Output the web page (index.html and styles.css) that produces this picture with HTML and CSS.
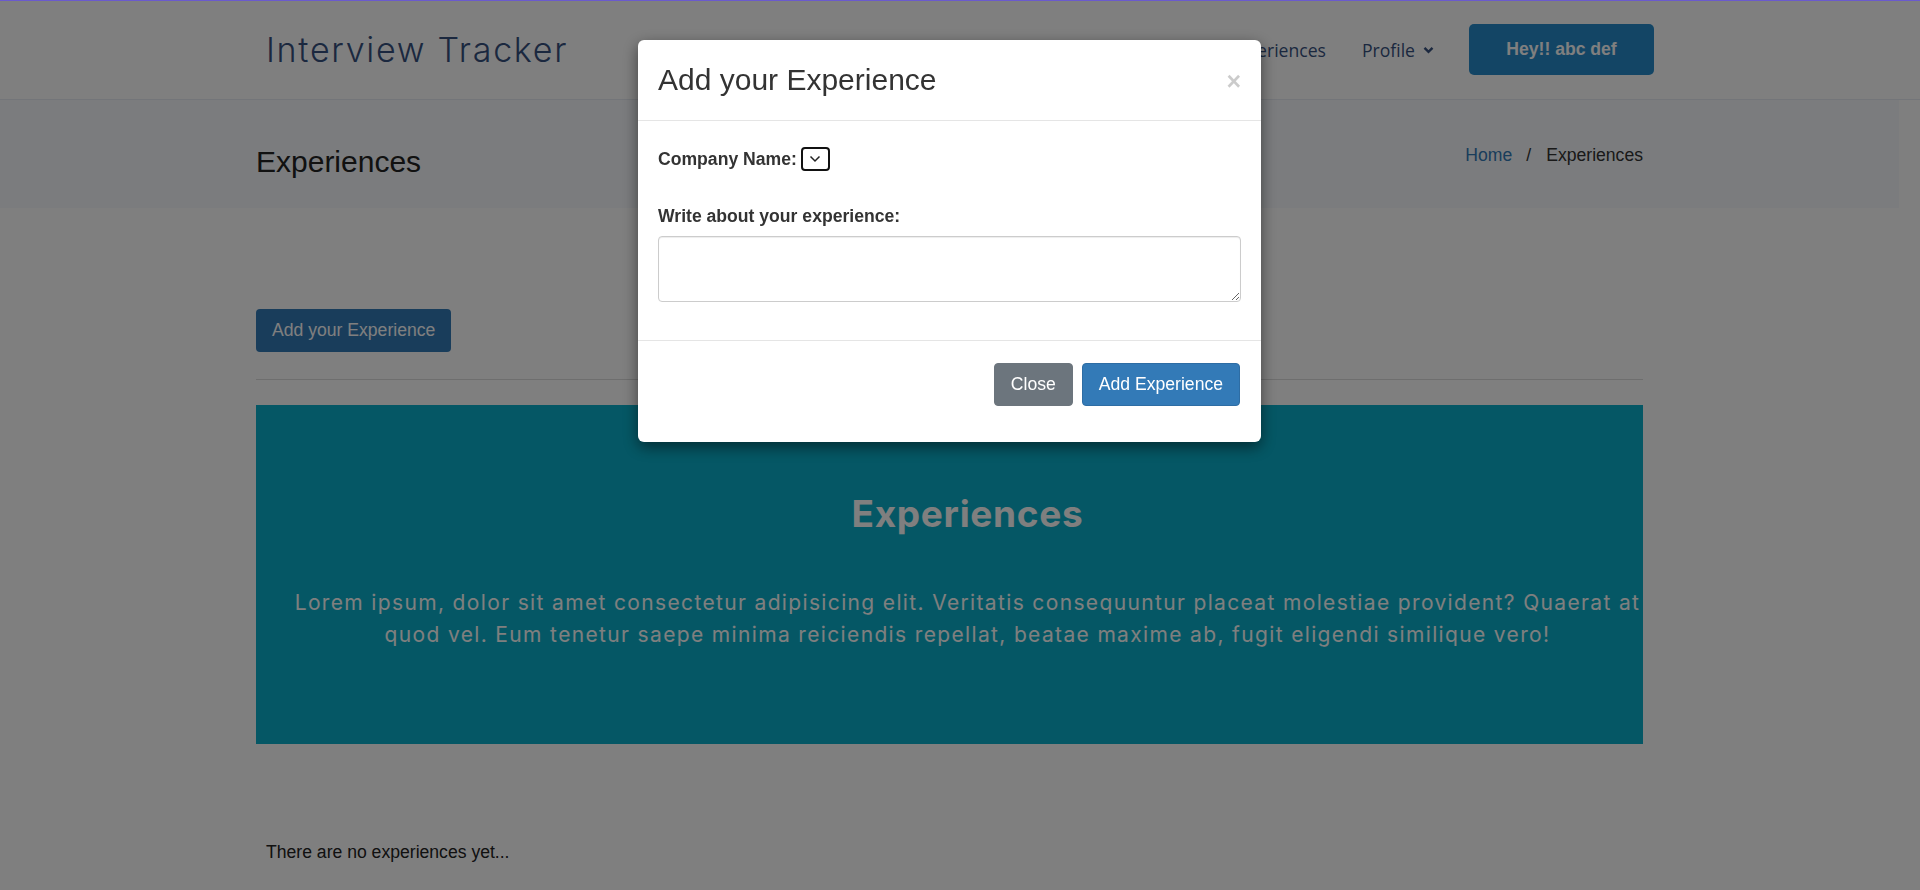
FILE: index.html
```html
<!DOCTYPE html>
<html lang="en">
<head>
<meta charset="utf-8">
<title>Interview Tracker - Experiences</title>
<link rel="stylesheet" href="styles.css">
</head>
<body>
<div class="focus-line"></div>
<header class="site-header">
  <div class="header-inner">
    <a class="logo" href="#">Interview Tracker</a>
    <nav class="main-nav">
      <a href="#">Home</a>
      <a href="#">Experiences</a>
      <a href="#" class="dropdown">Profile
        <svg class="chev" width="11" height="8" viewBox="0 0 11 8"><path d="M1.5 1.8 L5.5 5.8 L9.5 1.8" fill="none" stroke="currentColor" stroke-width="2.4"/></svg>
      </a>
    </nav>
    <a class="hey-btn" href="#">Hey!! abc def</a>
  </div>
</header>
<div class="page">
  <section class="title-band">
    <div class="container title-row">
      <h2 class="page-title">Experiences</h2>
      <ol class="breadcrumb">
        <li><a href="#">Home</a></li>
        <li class="sep">/</li>
        <li>Experiences</li>
      </ol>
    </div>
  </section>
  <main class="container main">
    <button class="btn add-btn" type="button">Add your Experience</button>
    <hr class="divider">
    <section class="banner">
      <div class="banner-inner">
        <h2 class="banner-title">Experiences</h2>
        <p class="banner-text">Lorem ipsum, dolor sit amet consectetur adipisicing elit. Veritatis consequuntur placeat molestiae provident? Quaerat at<br>quod vel. Eum tenetur saepe minima reiciendis repellat, beatae maxime ab, fugit eligendi similique vero!</p>
      </div>
    </section>
    <p class="empty">There are no experiences yet...</p>
  </main>
</div>
<div class="backdrop"></div>
<div class="modal">
  <div class="modal-dialog">
    <div class="modal-header">
      <h4 class="modal-title">Add your Experience</h4>
      <button class="close" type="button">&times;</button>
    </div>
    <div class="modal-body">
      <div class="field-inline">
        <label>Company Name:</label>
        <span class="select-box"><svg width="12" height="8" viewBox="0 0 12 8"><path d="M1.5 1.5 L6 6 L10.5 1.5" fill="none" stroke="#222" stroke-width="1.5"/></svg></span>
      </div>
      <div class="field">
        <label>Write about your experience:</label>
        <textarea class="text-input"></textarea>
      </div>
    </div>
    <div class="modal-footer">
      <button class="mbtn mbtn-secondary" type="button">Close</button>
      <button class="mbtn mbtn-primary" type="button">Add Experience</button>
    </div>
  </div>
</div>
</body>
</html>
```

FILE: styles.css
```css
html, body {
  margin: 0;
  padding: 0;
}
body {
  font-family: "Liberation Sans", Arial, sans-serif;
  font-size: 17.6px;
  color: #333;
  background: #fff;
  overflow: hidden;
}
.focus-line {
  position: fixed;
  top: 0;
  left: 0;
  right: 0;
  height: 1px;
  background: #6a5acd;
  z-index: 3000;
}

/* header */
.site-header {
  height: 100px;
  box-sizing: border-box;
  border-bottom: 1px solid #e6ebf2;
  background: #fff;
}
.header-inner {
  width: 1388px;
  height: 100%;
  margin: 0 auto;
  display: flex;
  align-items: center;
}
.logo {
  font-family: Inter, "Open Sans", sans-serif;
  font-weight: 300;
  font-size: 34px;
  letter-spacing: 1.7px;
  color: #37517e;
  text-decoration: none;
  margin-right: auto;
}
.main-nav {
  display: flex;
  align-items: center;
  gap: 36px;
}
.main-nav a {
  font-family: "Open Sans", sans-serif;
  font-size: 17.6px;
  color: #37517e;
  text-decoration: none;
  display: flex;
  align-items: center;
}
.chev {
  margin-left: 8px;
}
.hey-btn {
  margin-left: 35px;
  width: 185px;
  height: 51px;
  display: flex;
  align-items: center;
  justify-content: center;
  background: #268aca;
  color: #fff;
  font-weight: bold;
  font-size: 17.6px;
  border-radius: 5px;
  text-decoration: none;
}

/* page */
.page {
  padding-right: 21px;
}
.container {
  width: 1387px;
  margin: 0 auto;
}
.title-band {
  height: 108px;
  background: #f6f9fc;
}
.title-row {
  display: flex;
  justify-content: space-between;
  align-items: flex-start;
}
.page-title {
  margin: 44px 0 0;
  font-size: 30px;
  line-height: 36px;
  font-weight: normal;
  color: #222;
}
.breadcrumb {
  list-style: none;
  margin: 43px 0 0;
  padding: 0;
  display: flex;
  line-height: 24px;
  color: #333;
}
.breadcrumb a {
  color: #337ab7;
  text-decoration: none;
}
.breadcrumb .sep {
  margin: 0 15px 0 14px;
  color: #333;
}

.main {
  padding-top: 101px;
}
.add-btn {
  display: block;
  height: 43px;
  padding: 0 16px;
  border: none;
  border-radius: 4px;
  background: #337ab7;
  color: #fff;
  font-family: "Liberation Sans", Arial, sans-serif;
  font-size: 17.6px;
}
.divider {
  margin: 27px 0 25px;
  border: 0;
  border-top: 1px solid #dcdcdc;
}
.banner {
  height: 339px;
  box-sizing: border-box;
  background: #0aafca;
  overflow: hidden;
  padding-top: 85px;
}
.banner-inner {
  margin: 0 -18px 0 18px;
  text-align: center;
  color: #fff;
  font-family: Inter, "Open Sans", sans-serif;
  white-space: nowrap;
}
.banner-title {
  margin: 0;
  font-size: 37px;
  line-height: 48px;
  font-weight: 700;
  letter-spacing: 0.7px;
}
.banner-text {
  margin: 49px 0 0;
  font-size: 21px;
  line-height: 32px;
  letter-spacing: 1.35px;
}
.empty {
  margin: 96px 0 0;
  padding-left: 10px;
  line-height: 24px;
  color: #222;
}

/* overlay + modal */
.backdrop {
  position: fixed;
  inset: 0;
  background: rgba(0, 0, 0, 0.5);
  z-index: 1000;
}
.modal {
  position: fixed;
  top: 0;
  left: 0;
  right: 21px;
  bottom: 0;
  z-index: 1050;
}
.modal-dialog {
  width: 623px;
  margin: 40px auto 0;
  background: #fff;
  border-radius: 6px;
  box-shadow: 0 5px 15px rgba(0, 0, 0, 0.5);
}
.modal-header {
  display: flex;
  align-items: center;
  justify-content: space-between;
  padding: 20px 20px;
  border-bottom: 1px solid #e5e5e5;
}
.modal-title {
  margin: 0;
  font-size: 30px;
  line-height: 40px;
  font-weight: normal;
  color: #333;
}
.close {
  border: 0;
  background: none;
  padding: 0;
  font-family: "Liberation Sans", Arial, sans-serif;
  font-size: 25px;
  line-height: 1;
  font-weight: bold;
  color: #000;
  opacity: 0.2;
  margin-top: 2px;
}
.modal-body {
  padding: 26px 20px 38px;
}
.field-inline {
  display: flex;
  align-items: center;
  gap: 4px;
  height: 24px;
}
.field-inline label,
.field label {
  font-weight: bold;
  line-height: 24px;
  color: #333;
}
.select-box {
  width: 29px;
  height: 24px;
  box-sizing: border-box;
  border: 2px solid #111;
  border-radius: 4px;
  display: flex;
  align-items: center;
  justify-content: center;
}
.field {
  margin-top: 33px;
}
.field label {
  display: block;
}
.text-input {
  display: block;
  margin-top: 8px;
  width: 583px;
  height: 66px;
  box-sizing: border-box;
  border: 1px solid #ccc;
  border-radius: 4px;
  padding: 6px 12px;
  font-family: "Liberation Sans", Arial, sans-serif;
  font-size: 16px;
  box-shadow: inset 0 1px 1px rgba(0, 0, 0, 0.075);
}
.modal-footer {
  display: flex;
  justify-content: flex-end;
  gap: 9px;
  padding: 22px 21px 36px;
  border-top: 1px solid #e5e5e5;
}
.mbtn {
  height: 43px;
  padding: 0 16px;
  border: 1px solid transparent;
  border-radius: 4px;
  color: #fff;
  font-family: "Liberation Sans", Arial, sans-serif;
  font-size: 17.6px;
}
.mbtn-secondary {
  background: #6c757d;
  border-color: #6c757d;
}
.mbtn-primary {
  background: #337ab7;
  border-color: #2e6da4;
}
```
